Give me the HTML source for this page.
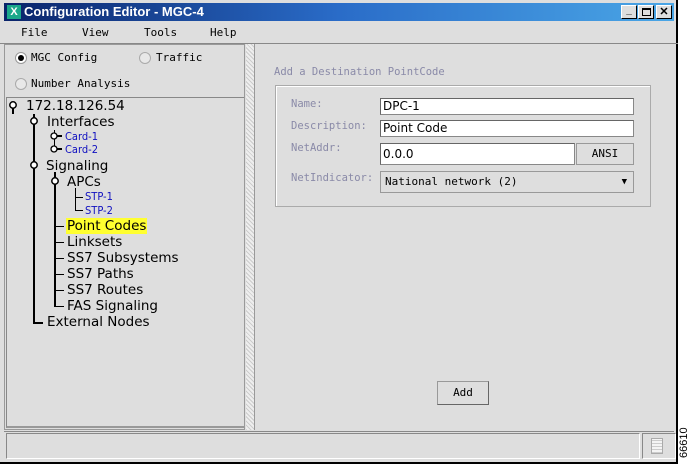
<!DOCTYPE html><html><head><style>
*{margin:0;padding:0;box-sizing:border-box}
body{width:691px;height:467px;background:#fff;position:relative;overflow:hidden;font-family:"DejaVu Sans Mono","Liberation Mono",monospace}
.a{position:absolute}
.t{font-family:"DejaVu Sans","Liberation Sans",sans-serif;font-size:13.5px;color:#000;white-space:nowrap;line-height:16px}
.s{font-family:"DejaVu Sans Condensed","DejaVu Sans",sans-serif;font-size:11px;color:#1010c0;line-height:13px;white-space:nowrap}
.m{font-size:11px;white-space:nowrap}
.lb{font-size:10.5px;color:#8a8aa8;white-space:nowrap}
.in{background:#fff;border:1px solid #888;border-top-color:#666;border-left-color:#666;font-family:"DejaVu Sans",sans-serif;font-size:12px;padding-left:2px;line-height:15px}
.v{background:#000;width:2px}
.h{background:#000;height:2px}
</style></head><body>
<div class="a" style="left:0;top:0;width:678px;height:464px;background:#dedede;border-right:2px solid #000;border-bottom:2px solid #000"></div>
<div class="a" style="left:4px;top:3px;width:670px;height:18px;background:linear-gradient(90deg,#0a246a,#2a6cc8 50%,#4aa6e6)"></div>
<div class="a" style="left:7px;top:5px;width:14px;height:14px;background:#1aa88a;color:#fff;font:bold 11px 'Liberation Sans';text-align:center;line-height:14px">X</div>
<div class="a" style="left:24px;top:3px;color:#fff;font:bold 13px 'Liberation Sans',sans-serif;line-height:18px">Configuration Editor - MGC-4</div>
<div class="a" style="left:621px;top:5px;width:16px;height:14px;background:#dedede;border:1px solid;border-color:#fff #000 #000 #fff;font:bold 10px sans-serif;text-align:center;line-height:10px">_</div>
<div class="a" style="left:638px;top:5px;width:16px;height:14px;background:#dedede;border:1px solid;border-color:#fff #000 #000 #fff"><div style="margin:2px 3px;width:9px;height:8px;border:1px solid #000;border-top-width:2px"></div></div>
<div class="a" style="left:656px;top:5px;width:16px;height:14px;background:#dedede;border:1px solid;border-color:#fff #000 #000 #fff;font:bold 11px sans-serif;text-align:center;line-height:12px">✕</div>
<div class="a m" style="left:21px;top:26px">File</div>
<div class="a m" style="left:82px;top:26px">View</div>
<div class="a m" style="left:144px;top:26px">Tools</div>
<div class="a m" style="left:210px;top:26px">Help</div>
<div class="a" style="left:0;top:43px;width:678px;height:1px;background:#888"></div>
<div class="a" style="left:4px;top:44px;width:241px;height:386px;border:1px solid #999"></div>
<div class="a" style="left:15px;top:52px;width:12px;height:12px;border-radius:50%;background:#fff;border:1px solid #999"><div style="margin:2px;width:6px;height:6px;border-radius:50%;background:#000"></div></div>
<div class="a m" style="left:31px;top:51px">MGC Config</div>
<div class="a" style="left:139px;top:52px;width:12px;height:12px;border-radius:50%;background:#e8e8e8;border:1px solid #aaa"></div>
<div class="a m" style="left:156px;top:51px">Traffic</div>
<div class="a" style="left:15px;top:78px;width:12px;height:12px;border-radius:50%;background:#e8e8e8;border:1px solid #aaa"></div>
<div class="a m" style="left:31px;top:77px">Number Analysis</div>
<div class="a" style="left:6px;top:97px;width:238px;height:1px;background:#888"></div>
<div class="a" style="left:6px;top:98px;width:238px;height:330px;border-left:1px solid #888;border-bottom:2px solid #999"></div>
<div class="a" style="left:246px;top:44px;width:8px;height:386px;background:repeating-linear-gradient(45deg,#ccc 0 1px,#eee 1px 3px)"></div>
<div class="a" style="left:254px;top:44px;width:1px;height:386px;background:#999"></div>
<!-- tree lines -->
<div class="a v" style="left:33px;top:114px;height:210px"></div>
<div class="a h" style="left:33px;top:322px;width:10px"></div>
<div class="a v" style="left:54px;top:172px;height:134px"></div>
<div class="a" style="left:54px;top:130px;height:18px;width:1px;background:#000"></div>
<div class="a" style="left:54px;top:226px;width:10px;height:1px;background:#000"></div>
<div class="a" style="left:54px;top:242px;width:10px;height:1px;background:#000"></div>
<div class="a" style="left:54px;top:258px;width:10px;height:1px;background:#000"></div>
<div class="a" style="left:54px;top:274px;width:10px;height:1px;background:#000"></div>
<div class="a" style="left:54px;top:290px;width:10px;height:1px;background:#000"></div>
<div class="a" style="left:54px;top:306px;width:10px;height:1px;background:#000"></div>
<div class="a" style="left:75px;top:188px;width:1px;height:23px;background:#000"></div>
<div class="a" style="left:75px;top:197px;width:8px;height:1px;background:#000"></div>
<div class="a" style="left:75px;top:210px;width:8px;height:1px;background:#000"></div>
<svg class="a" style="left:8px;top:100px" width="10" height="14"><circle cx="5" cy="5" r="3.2" fill="#fff" stroke="#000" stroke-width="1.5"/><rect x="4" y="8" width="2" height="6"/></svg>
<svg class="a" style="left:29px;top:116px" width="10" height="14"><circle cx="5" cy="5" r="3.2" fill="#fff" stroke="#000" stroke-width="1.5"/><rect x="4" y="8" width="2" height="6"/></svg>
<svg class="a" style="left:29px;top:160px" width="10" height="14"><circle cx="5" cy="5" r="3.2" fill="#fff" stroke="#000" stroke-width="1.5"/><rect x="4" y="8" width="2" height="6"/></svg>
<svg class="a" style="left:50px;top:176px" width="10" height="14"><circle cx="5" cy="5" r="3.2" fill="#fff" stroke="#000" stroke-width="1.5"/><rect x="4" y="8" width="2" height="6"/></svg>
<svg class="a" style="left:50px;top:131px" width="14" height="10"><circle cx="4" cy="5" r="3" fill="#fff" stroke="#000" stroke-width="1.3"/><rect x="7" y="4" width="5" height="2"/></svg>
<svg class="a" style="left:50px;top:144px" width="14" height="10"><circle cx="4" cy="5" r="3" fill="#fff" stroke="#000" stroke-width="1.3"/><rect x="7" y="4" width="5" height="2"/></svg>
<div class="a t" style="left:26px;top:98px">172.18.126.54</div>
<div class="a t" style="left:47px;top:114px">Interfaces</div>
<div class="a s" style="left:65px;top:130px">Card-1</div>
<div class="a s" style="left:65px;top:143px">Card-2</div>
<div class="a t" style="left:46px;top:158px">Signaling</div>
<div class="a t" style="left:67px;top:174px">APCs</div>
<div class="a s" style="left:85px;top:190px">STP-1</div>
<div class="a s" style="left:85px;top:204px">STP-2</div>
<div class="a t" style="left:66px;top:218px;background:#ffff30;padding:0 1px">Point Codes</div>
<div class="a t" style="left:67px;top:234px">Linksets</div>
<div class="a t" style="left:67px;top:250px">SS7 Subsystems</div>
<div class="a t" style="left:67px;top:266px">SS7 Paths</div>
<div class="a t" style="left:67px;top:282px">SS7 Routes</div>
<div class="a t" style="left:67px;top:298px">FAS Signaling</div>
<div class="a t" style="left:47px;top:314px">External Nodes</div>
<!-- right form -->
<div class="a lb" style="left:274px;top:66px">Add a Destination PointCode</div>
<div class="a" style="left:275px;top:85px;width:376px;height:122px;border:1px solid #aaa;box-shadow:inset 1px 1px #fff"></div>
<div class="a lb" style="left:291px;top:98px">Name:</div>
<div class="a lb" style="left:291px;top:120px">Description:</div>
<div class="a lb" style="left:291px;top:142px">NetAddr:</div>
<div class="a lb" style="left:291px;top:172px">NetIndicator:</div>
<div class="a in" style="left:380px;top:98px;width:254px;height:17px">DPC-1</div>
<div class="a in" style="left:380px;top:120px;width:254px;height:17px">Point Code</div>
<div class="a in" style="left:380px;top:143px;width:195px;height:22px;line-height:20px">0.0.0</div>
<div class="a" style="left:576px;top:143px;width:58px;height:22px;border:1px solid #999;text-align:center;font-size:11px;line-height:20px">ANSI</div>
<div class="a" style="left:380px;top:171px;width:254px;height:22px;border:1px solid #999;font-size:11px;line-height:20px;padding-left:4px">National network (2)<span style="position:absolute;right:6px;top:0;font-size:9px">▼</span></div>
<div class="a" style="left:437px;top:381px;width:52px;height:24px;border:1px solid;border-color:#999 #666 #666 #999;text-align:center;font-size:11px;line-height:22px">Add</div>
<!-- status -->
<div class="a" style="left:4px;top:431px;width:670px;height:1px;background:#888"></div>
<div class="a" style="left:6px;top:433px;width:634px;height:26px;border:1px solid;border-color:#888 #fff #fff #888"></div>
<div class="a" style="left:642px;top:433px;width:34px;height:26px;border:1px solid;border-color:#888 #fff #fff #888"></div>
<div class="a" style="left:651px;top:438px;width:12px;height:16px;background:#f4f4f4;border:1px solid #aaa;background-image:repeating-linear-gradient(0deg,#ccc 0 1px,transparent 1px 3px)"></div>
<div class="a" style="left:678px;top:458px;transform:rotate(-90deg);transform-origin:0 0;font:11px 'Liberation Sans',sans-serif;line-height:12px">66610</div>
</body></html>
